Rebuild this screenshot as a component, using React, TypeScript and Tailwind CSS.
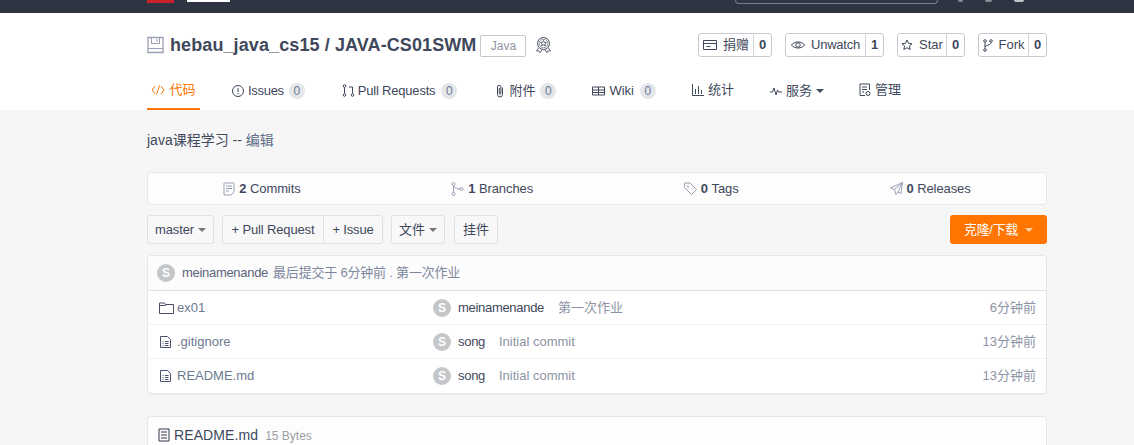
import React from 'react';

const Ic = ({ w = 14, h = 14, vb = '0 0 14 14', color = '#40485b', children }: { w?: number; h?: number; vb?: string; color?: string; children: React.ReactNode }) => (
  <svg width={w} height={h} viewBox={vb} fill="none" stroke={color} strokeWidth="1" className="shrink-0">
    {children}
  </svg>
);

const Caret = ({ color = '#555' }: { color?: string }) => (
  <span className="inline-block w-0 h-0 border-x-[4px] border-x-transparent border-t-[4px]" style={{ borderTopColor: color }} />
);

const Badge = ({ n }: { n: number }) => (
  <span className="ml-[1px] w-4 h-4 rounded-full bg-[#e4e6e9] text-[#6b7a99] text-[12px] flex items-center justify-center">{n}</span>
);

const Avatar = () => (
  <span className="w-[18px] h-[18px] rounded-full bg-[#c4c6c9] text-white text-[12px] font-bold flex items-center justify-center shrink-0">S</span>
);

const CountButton = ({ icon, label, n, w, tight }: { icon: React.ReactNode; label: string; n: number; w: string; tight?: boolean }) => (
  <div className={`flex h-6 border border-[#c8cad3] rounded-[3px] bg-white text-[13px] text-[#40485b] ${w}`}>
    <div className="flex-1 flex items-center justify-center gap-[6px] border-r border-[#d4d5dc]">
      {icon}
      <span className={tight ? 'tracking-[-0.25px]' : ''}>{label}</span>
    </div>
    <span className="w-[17px] flex items-center justify-center font-bold">{n}</span>
  </div>
);

const FileIcon = () => (
  <Ic w={14} h={14} color="#4a4f6a">
    <path d="M1.500 1.500h7l3 3v8h-10z" />
    <path d="M3.500 6.500h1M6 6.500h3.500M3.500 8.500h1M6 8.500h3.500M3.500 10.500h1M6 10.500h3.500" />
  </Ic>
);

const rows = [
  { name: 'ex01', dir: true, author: 'meinamenande', msg: '第一次作业', time: '6分钟前' },
  { name: '.gitignore', dir: false, author: 'song', msg: 'Initial commit', time: '13分钟前' },
  { name: 'README.md', dir: false, author: 'song', msg: 'Initial commit', time: '13分钟前' },
];

export default function App() {
  return (
    <div className="h-[445px] overflow-hidden bg-[#f6f6f6] text-[#40485b] text-[13px] font-['Liberation_Sans','Noto_Sans_CJK_SC',sans-serif]">
      {/* top bar, mostly cropped */}
      <div className="h-[13px] bg-[#2f3442] overflow-hidden">
        <div className="w-[900px] ml-[147px] h-[13px] flex items-start">
          <div className="w-[27px] h-[3px] bg-[#c9202c]" />
          <div className="ml-[13px] w-[43px] h-[2px] bg-white" />
          <div className="ml-[505px] w-[203px] h-[4px] border border-t-0 border-[#7b7f8a] rounded-b-[8px]" />
          <div className="ml-[20px] w-[5px] h-[2px] bg-[#8b8e97] rounded-b" />
          <div className="ml-[22px] w-[7px] h-[2px] bg-[#8b8e97] rounded-b" />
          <div className="ml-[22px] w-[10px] h-[2px] bg-[#c4c6c9] rounded-b" />
        </div>
      </div>

      {/* repo header */}
      <div className="bg-white h-[97px]">
        <div className="w-[900px] ml-[147px]">
          <div className="h-[64px] pt-[20px] flex items-start justify-between">
            <div className="flex items-center h-6">
              <Ic w={17} h={18} vb="0 0 17 18" color="#9aa0b4">
                <path d="M1 1.500h15v15H1z" strokeWidth="1.300" />
                <path d="M4.500 1.500v6h8v-6M10 3v3M1 12.500h15" />
              </Ic>
              <span className="ml-[6px] text-[18px] font-bold text-[#40485b] tracking-[0.1px]">hebau_java_cs15 / JAVA-CS01SWM</span>
              <span className="ml-[4px] w-[46px] h-[22px] mt-[2px] border border-[#c5c6d0] rounded-[2px] text-[#8f94a3] text-[12px] flex items-center justify-center">Java</span>
              <span className="ml-[9px]">
                <Ic w={17} h={18} vb="0 0 17 18">
                  <circle cx="8.500" cy="7.500" r="6" />
                  <circle cx="8.500" cy="7.500" r="4.300" strokeWidth="0.600" />
                  <path d="M8.500 4.500l.9 2h2l-1.600 1.400.6 2.100-1.900-1.200-1.900 1.200.6-2.100L5.600 6.500h2z" strokeWidth="0.800" />
                  <path d="M3.500 12l-2 3 2.500-.2 1 2 2-3M13.500 12l2 3-2.500-.2-1 2-2-3" strokeWidth="0.800" />
                </Ic>
              </span>
            </div>
            <div className="flex gap-[13px]">
              <CountButton
                w="w-[74px]"
                label="捐赠"
                n={0}
                icon={
                  <Ic>
                    <path d="M.5 2.500h13v9H.5zM.5 5.500h13M3.500 8.500h4" />
                  </Ic>
                }
              />
              <CountButton
                w="w-[99px]"
                label="Unwatch"
                n={1}
                tight
                icon={
                  <Ic>
                    <path d="M.5 7C3 3 11 3 13.500 7 11 11 3 11 .5 7z" />
                    <circle cx="7" cy="7" r="2.200" />
                  </Ic>
                }
              />
              <CountButton
                w="w-[68px]"
                label="Star"
                n={0}
                icon={
                  <Ic w={12} h={12} vb="0 0 12 12">
                    <path d="M6 1l1.500 3.300 3.500.4-2.600 2.300.8 3.500L6 8.700 2.800 10.500l.8-3.500L1 4.700l3.500-.4z" />
                  </Ic>
                }
              />
              <CountButton
                w="w-[69px]"
                label="Fork"
                n={0}
                icon={
                  <Ic w={10} h={13} vb="0 0 10 13">
                    <circle cx="2" cy="2" r="1.300" />
                    <circle cx="8" cy="2" r="1.300" />
                    <circle cx="2" cy="11" r="1.300" />
                    <path d="M2 3.500v6M8 3.500c0 3-6 2.500-6 4.500" />
                  </Ic>
                }
              />
            </div>
          </div>

          {/* tabs */}
          <div className="h-[33px] flex items-start text-[13px]">
            <div className="w-[53px] h-[33px] border-b-[2px] border-[#ff7500] flex items-start justify-center pt-[6px] text-[#ff7500] gap-[4px]">
              <Ic color="#ff7500">
                <path d="M4 3L1 7l3 4M10 3l3 4-3 4M8.500 2.500l-3 9" />
              </Ic>
              <span className="leading-[15px] -mt-[1px]">代码</span>
            </div>
            <div className="ml-[32px] flex items-center h-[27px] gap-[4px]">
              <Ic w={12} h={12} vb="0 0 12 12">
                <circle cx="6" cy="6" r="5.500" />
                <path d="M6 3v4M6 8v1.200" />
              </Ic>
              <span className="tracking-[-0.3px]">Issues</span>
              <Badge n={0} />
            </div>
            <div className="ml-[37px] flex items-center h-[27px] gap-[3px]">
              <Ic w={13} h={13} vb="0 0 13 13">
                <circle cx="2.500" cy="2" r="1.300" />
                <circle cx="2.500" cy="11" r="1.300" />
                <circle cx="10.500" cy="11" r="1.300" />
                <path d="M2.500 3.500v6M10.500 9.500V3H7" />
              </Ic>
              <span className="mr-[2px] tracking-[-0.2px]">Pull Requests</span>
              <Badge n={0} />
            </div>
            <div className="ml-[38px] flex items-center h-[27px] gap-[4px]">
              <Ic w={10} h={14} vb="0 0 10 14">
                <path d="M7.500 3.500v7a2.500 2.500 0 0 1-5 0V3a1.700 1.700 0 0 1 3.400 0v6.500a.8.800 0 0 1-1.600 0V4" />
              </Ic>
              <span>附件</span>
              <Badge n={0} />
            </div>
            <div className="ml-[36px] flex items-center h-[27px] gap-[4px]">
              <Ic w={13} h={10} vb="0 0 13 10">
                <path d="M.5 1h12v8H.5zM6.500 1v8M.5 4h12M.5 6.500h12" />
              </Ic>
              <span className="mr-[1px]">Wiki</span>
              <Badge n={0} />
            </div>
            <div className="ml-[36px] flex items-center h-[25px] gap-[4px]">
              <Ic w={12} h={12} vb="0 0 12 12">
                <path d="M.5 0v11.500H12M3.500 5v5M6.500 2v8M9.500 6v4" />
              </Ic>
              <span>统计</span>
            </div>
            <div className="ml-[36px] flex items-center h-[27px] gap-[4px]">
              <Ic w={12} h={10} vb="0 0 12 10">
                <path d="M0 6h2.500l1.500-4 2 7 1.500-5 1 2H12" />
              </Ic>
              <span>服务</span>
              <Caret color="#40485b" />
            </div>
            <div className="ml-[35px] flex items-center h-[25px] gap-[4px]">
              <Ic w={12} h={14} vb="0 0 12 14">
                <path d="M6 12.500H1V1h9.500v6M3 4h5M3 6.500h5M3 9h2" />
                <circle cx="9" cy="10.500" r="2" />
              </Ic>
              <span>管理</span>
            </div>
          </div>
        </div>
      </div>

      <div className="w-[900px] ml-[147px]">
        {/* description */}
        <div className="h-[62px] pt-[21px] text-[14px] leading-[18px]">
          <span>java课程学习</span>
          <span className="text-[#40485b]"> -- </span>
          <span className="text-[#5f6d88]">编辑</span>
        </div>

        {/* stats */}
        <div className="h-[33px] bg-[#fdfdfd] border border-[#e6e7e9] rounded-[4px] flex items-center justify-around">
          <div className="flex items-center gap-[4px]">
            <Ic w={12} h={14} vb="0 0 12 14" color="#9aa0b4">
              <path d="M1 1h10v9l-3 3H1zM3 4h6M3 6.500h6M3 9h3" />
            </Ic>
            <span className="tracking-[-0.1px]"><b>2</b> Commits</span>
          </div>
          <div className="flex items-center gap-[4px]">
            <Ic w={13} h={14} vb="0 0 13 14" color="#9aa0b4">
              <circle cx="2.500" cy="2" r="1.500" />
              <circle cx="2.500" cy="12" r="1.500" />
              <circle cx="10.500" cy="7" r="1.500" />
              <path d="M2.500 3.500v7M3 4c.5 2 3 3 6 3" />
            </Ic>
            <span className="tracking-[-0.1px]"><b>1</b> Branches</span>
          </div>
          <div className="flex items-center gap-[4px]">
            <Ic w={13} h={13} vb="0 0 13 13" color="#9aa0b4">
              <path d="M.5 1H6l6.500 6.500L7.500 12.500.5 5.500z" />
              <circle cx="4" cy="4.500" r=".6" />
            </Ic>
            <span><b>0</b> Tags</span>
          </div>
          <div className="flex items-center gap-[4px]">
            <Ic w={13} h={13} vb="0 0 13 13" color="#9aa0b4">
              <path d="M12.500.5L.5 6l4 1.500L6 12.500l2-2.500 3 1.500zM4.500 7.500L12.500.5 8 10" />
            </Ic>
            <span className="tracking-[-0.1px]"><b>0</b> Releases</span>
          </div>
        </div>

        {/* toolbar */}
        <div className="mt-[10px] h-[29px] flex text-[13px] text-[#40485b]">
          <div className="w-[67px] bg-[#f8f8f8] border border-[#dfe1e5] rounded-[3px] flex items-center justify-center gap-[4px] tracking-[-0.1px]">
            master <Caret color="#777" />
          </div>
          <div className="ml-[8px] flex bg-[#f8f8f8] border border-[#dfe1e5] rounded-[3px]">
            <div className="w-[101px] flex items-center justify-center border-r border-[#dfe1e5] tracking-[-0.15px]">+ Pull Request</div>
            <div className="w-[58px] flex items-center justify-center tracking-[-0.15px]">+ Issue</div>
          </div>
          <div className="ml-[8px] w-[54px] bg-[#f8f8f8] border border-[#dfe1e5] rounded-[3px] flex items-center justify-center gap-[4px]">
            文件 <Caret color="#777" />
          </div>
          <div className="ml-[9px] w-[44px] bg-[#f8f8f8] border border-[#dfe1e5] rounded-[3px] flex items-center justify-center">挂件</div>
          <div className="ml-auto w-[97px] bg-[#ff7500] rounded-[3px] text-white flex items-center justify-center gap-[7px] tracking-[-0.3px]">
            克隆/下载 <Caret color="#ffd2a8" />
          </div>
        </div>

        {/* file list */}
        <div className="mt-[11px] bg-white border border-[#e4e6e9] rounded-[4px] shadow-[0_1px_1px_rgba(0,0,0,0.04)]">
          <div className="h-[35px] bg-[#fcfcfc] border-b border-[#e0e2e6] flex items-center pl-[9px]">
            <Avatar />
            <span className="ml-[7px] text-[#5b6478] tracking-[-0.3px]">meinamenande</span>
            <span className="ml-[5px] text-[#7c879c] tracking-[-0.2px]">最后提交于 6分钟前 . 第一次作业</span>
          </div>
          {rows.map((r, i) => (
            <div key={r.name} className={`h-[34px] flex items-center ${i < 2 ? 'border-b border-[#eff0f2]' : ''}`}>
              <div className="w-[285px] pl-[11px] flex items-center gap-[4px] text-[#6c7a90]">
                {r.dir ? (
                  <span className="-mr-[1px]">
                    <Ic w={15} h={14} vb="0 0 15 14" color="#4a4f6a">
                      <path d="M.5 2h5l1 1.500h8v9H.5zM.5 4.500h6V3.500" />
                    </Ic>
                  </span>
                ) : (
                  <FileIcon />
                )}
                <span>{r.name}</span>
              </div>
              <Avatar />
              <span className="ml-[7px] text-[#40485b] tracking-[-0.3px]">{r.author}</span>
              <span className="ml-[14px] text-[#8c93a3]">{r.msg}</span>
              <span className="ml-auto mr-[10px] text-[#8c93a3]">{r.time}</span>
            </div>
          ))}
        </div>

        {/* readme */}
        <div className="mt-[22px] h-[60px] bg-[#fdfdfd] border border-[#e6e7e9] rounded-[4px] pl-[10px] pt-[11px] flex items-start gap-[4px]">
          <Ic w={12} h={14} vb="0 0 12 14" color="#30364a">
            <path d="M1 1h10v12H1zM3 4h6M3 7h6M3 10h6" />
          </Ic>
          <span className="text-[14px] leading-[16px] -mt-[1px] tracking-[0.1px]">README.md</span>
          <span className="ml-[3px] text-[12px] leading-[16px] text-[#9b9ea6]">15 Bytes</span>
        </div>
      </div>
    </div>
  );
}
